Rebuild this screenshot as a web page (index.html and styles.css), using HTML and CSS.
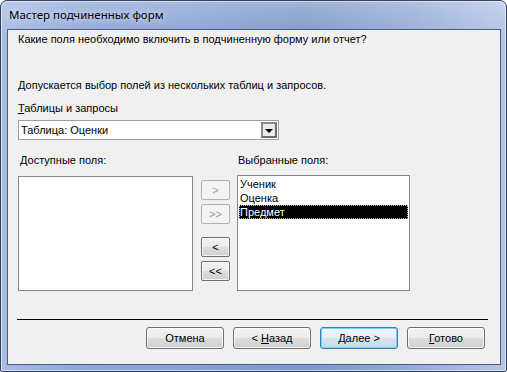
FILE: index.html
```html
<!DOCTYPE html>
<html lang="ru">
<head>
    <meta charset="UTF-8">
    <title>Мастер подчиненных форм</title>
    <link rel="stylesheet" href="styles.css">
</head>
<body>
    <div class="window">
        <div class="titlebar">Мастер подчиненных форм</div>
        <div class="client">
            <p class="question">Какие поля необходимо включить в подчиненную форму или отчет?</p>
            <p class="note">Допускается выбор полей из нескольких таблиц и запросов.</p>
            <p class="label"><u>Т</u>аблицы и запросы</p>
            <div class="combo">
                <span class="combo-text">Таблица: Оценки</span>
                <span class="combo-btn"><span class="arrow"></span></span>
            </div>

            <div class="fields">
                <div class="col col-left">
                    <p class="label">Доступные поля:</p>
                    <div class="list"></div>
                </div>
                <div class="movers">
                    <button class="mover" disabled>&gt;</button>
                    <button class="mover" disabled>&gt;&gt;</button>
                    <button class="mover mover-gap">&lt;</button>
                    <button class="mover">&lt;&lt;</button>
                </div>
                <div class="col col-right">
                    <p class="label">Выбранные поля:</p>
                    <div class="list">
                        <div class="item">Ученик</div>
                        <div class="item">Оценка</div>
                        <div class="item selected">Предмет</div>
                    </div>
                </div>
            </div>

            <div class="separator"></div>

            <div class="actions">
                <button class="btn">Отмена</button>
                <button class="btn">&lt; <u>Н</u>азад</button>
                <button class="btn btn-default"><u>Д</u>алее &gt;</button>
                <button class="btn"><u>Г</u>отово</button>
            </div>
        </div>
    </div>
</body>
</html>
```

FILE: styles.css
```css
body {
    margin: 0;
    width: 507px;
    height: 372px;
    background: #fff;
    font-family: "Liberation Sans", Arial, sans-serif;
    font-size: 11px;
    color: #000;
}

p {
    margin: 0;
}

.window {
    box-sizing: border-box;
    width: 507px;
    height: 372px;
    border: 1px solid #34425f;
    border-radius: 7px 7px 2px 2px;
    background:
        linear-gradient(to bottom, rgba(255,255,255,0.25), rgba(255,255,255,0) 40px),
        linear-gradient(to right, #a7bbe3, #8fa8da 15%, #8aa3d6 35%, #7f98c8 60%, #93a9d6 80%, #b4c5e6);
    box-shadow: inset 0 0 0 1px rgba(255,255,255,0.55);
    padding: 0 5px 6px 6px;
    display: flex;
    flex-direction: column;
}

.titlebar {
    height: 28px;
    line-height: 27px;
    padding-left: 2px;
    font-family: "Noto Sans", sans-serif;
    font-size: 11.5px;
    color: #000;
    text-shadow: 0 0 6px rgba(255,255,255,0.9);
}

.client {
    flex: 1;
    border: 1px solid #4b5b7e;
    background: #f0f0f0;
    padding: 3px 10px 0 10px;
    position: relative;
}

.question {
    line-height: 13px;
}

.note {
    margin-top: 33px;
    line-height: 13px;
}

.label {
    line-height: 13px;
}

.note + .label {
    margin-top: 10px;
}

.combo {
    margin-top: 5px;
    width: 261px;
    height: 20px;
    box-sizing: border-box;
    border: 1px solid #a0a0a0;
    background: #fff;
    display: flex;
    align-items: center;
    justify-content: space-between;
    padding: 0 1px 0 2px;
}

.combo-btn {
    width: 16px;
    height: 16px;
    box-sizing: border-box;
    border: 2px solid #6d6d6d;
    border-top-color: #8a8a8a;
    border-left-color: #8a8a8a;
    background: #ececec;
    display: flex;
    align-items: center;
    justify-content: center;
}

.arrow {
    width: 0;
    height: 0;
    border-left: 4px solid transparent;
    border-right: 4px solid transparent;
    border-top: 4px solid #000;
    margin-top: 2px;
}

.fields {
    display: flex;
    margin-top: 14px;
}

.col-left {
    width: 175px;
}

.col-left .label {
    padding-left: 2px;
}

.col-right {
    width: 173px;
}

.col-right .label {
    padding-left: 1px;
}

.list {
    box-sizing: border-box;
    border: 1px solid #828790;
    background: #fff;
    height: 115px;
    margin-top: 9px;
    padding: 1px;
}

.col-right .list {
    height: 116px;
    margin-top: 8px;
}

.item {
    height: 14px;
    line-height: 14px;
    padding-left: 1px;
}

.item.selected {
    background: #000;
    color: #fff;
    outline: 1px dotted #c8c8a0;
    outline-offset: -1px;
}

.movers {
    width: 29px;
    margin: 26px 7px 0 8px;
    display: flex;
    flex-direction: column;
    gap: 4px;
}

.mover {
    width: 29px;
    height: 20px;
    padding: 0;
    font-family: "Liberation Sans", Arial, sans-serif;
    font-size: 11px;
    border: 1px solid #707070;
    border-radius: 2px;
    background: linear-gradient(to bottom, #f2f2f2 0%, #ebebeb 50%, #dddddd 51%, #cfcfcf 100%);
    box-shadow: inset 0 0 0 1px rgba(255,255,255,0.7);
    color: #000;
}

.mover[disabled] {
    border-color: #adb2b5;
    background: #f4f4f4;
    color: #9a9a9a;
    box-shadow: none;
}

.mover-gap {
    margin-top: 9px;
}

.separator {
    position: absolute;
    left: 9px;
    right: 12px;
    top: 289px;
    border-top: 1px solid #000;
}

.actions {
    position: absolute;
    right: 15px;
    top: 297px;
    display: flex;
    gap: 9px;
}

.btn {
    width: 78px;
    height: 22px;
    padding: 0;
    font-family: "Liberation Sans", Arial, sans-serif;
    font-size: 11px;
    color: #000;
    border: 1px solid #707070;
    border-radius: 3px;
    background: linear-gradient(to bottom, #f2f2f2 0%, #ebebeb 50%, #dddddd 51%, #cfcfcf 100%);
    box-shadow: inset 0 0 0 1px rgba(255,255,255,0.75);
}

.btn-default {
    border-color: #3c7fb1;
    background: linear-gradient(to bottom, #f1f6f9 0%, #e6eef4 50%, #d8e4ec 51%, #cddbe5 100%);
    box-shadow: inset 0 0 0 1px #6fd3f7;
}

u {
    text-decoration: underline;
    text-underline-offset: 1px;
}
```
